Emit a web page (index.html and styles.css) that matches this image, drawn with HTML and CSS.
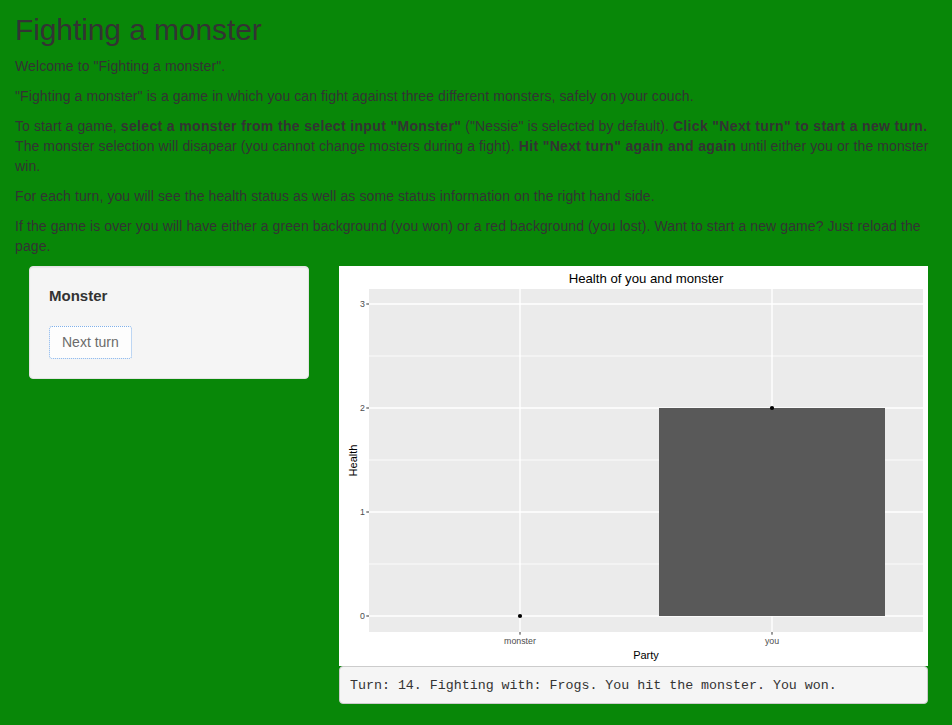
FILE: index.html
```html
<!DOCTYPE html>
<html lang="en">
<head>
<meta charset="utf-8">
<title>Fighting a monster</title>
<link rel="stylesheet" href="styles.css">
</head>
<body>
<div class="container">
  <h2 class="title">Fighting a monster</h2>
  <p>Welcome to "Fighting a monster".</p>
  <p>"Fighting a monster" is a game in which you can fight against three different monsters, safely on your couch.</p>
  <p>To start a game, <strong>select a monster from the select input "Monster"</strong> ("Nessie" is selected by default). <strong>Click "Next turn" to start a new turn.</strong> The monster selection will disapear (you cannot change mosters during a fight). <strong>Hit "Next turn" again and again</strong> until either you or the monster win.</p>
  <p>For each turn, you will see the health status as well as some status information on the right hand side.</p>
  <p>If the game is over you will have either a green background (you won) or a red background (you lost). Want to start a new game? Just reload the page.</p>

  <div class="layout">
    <div class="well">
      <div class="form-group">
        <label class="control-label">Monster</label>
      </div>
      <button class="btn" type="button">Next turn</button>
    </div>

    <div class="main">
      <div class="plot">
        <svg width="589" height="400" viewBox="0 0 589 400" xmlns="http://www.w3.org/2000/svg">
          <rect x="0" y="0" width="589" height="400" fill="#ffffff"/>
          <text x="307" y="16.7" class="g-title" text-anchor="middle">Health of you and monster</text>
          <rect x="30" y="23" width="554" height="343" fill="#EBEBEB"/>
          <g stroke="#ffffff" stroke-width="0.8">
            <line x1="30" y1="90" x2="584" y2="90"/>
            <line x1="30" y1="194" x2="584" y2="194"/>
            <line x1="30" y1="298" x2="584" y2="298"/>
          </g>
          <g stroke="#ffffff" stroke-width="1.4">
            <line x1="30" y1="38" x2="584" y2="38"/>
            <line x1="30" y1="142" x2="584" y2="142"/>
            <line x1="30" y1="246" x2="584" y2="246"/>
            <line x1="30" y1="350" x2="584" y2="350"/>
            <line x1="181" y1="23" x2="181" y2="366"/>
            <line x1="433" y1="23" x2="433" y2="366"/>
          </g>
          <rect x="320" y="142" width="226" height="208" fill="#595959"/>
          <circle cx="181" cy="350" r="2.1" fill="#000"/>
          <circle cx="433" cy="142" r="2.1" fill="#000"/>
          <g stroke="#333333" stroke-width="1">
            <line x1="27.3" y1="38" x2="30" y2="38"/>
            <line x1="27.3" y1="142" x2="30" y2="142"/>
            <line x1="27.3" y1="246" x2="30" y2="246"/>
            <line x1="27.3" y1="350" x2="30" y2="350"/>
            <line x1="181" y1="366" x2="181" y2="368.7"/>
            <line x1="433" y1="366" x2="433" y2="368.7"/>
          </g>
          <g class="g-axis" text-anchor="end">
            <text x="26" y="41.2">3</text>
            <text x="26" y="145.2">2</text>
            <text x="26" y="249.2">1</text>
            <text x="26" y="353.2">0</text>
          </g>
          <g class="g-axis" text-anchor="middle">
            <text x="181" y="378.3">monster</text>
            <text x="433" y="378.3">you</text>
          </g>
          <text x="307" y="393" class="g-lab" text-anchor="middle">Party</text>
          <text class="g-lab" text-anchor="middle" transform="translate(17.5 194.5) rotate(-90)">Health</text>
        </svg>
      </div>
      <pre class="status">Turn: 14. Fighting with: Frogs. You hit the monster. You won.</pre>
    </div>
  </div>
</div>
</body>
</html>
```

FILE: styles.css
```css
html, body {
  margin: 0;
  padding: 0;
}

body {
  background: #088708;
  color: #333333;
  font-family: "Liberation Sans", Arial, Helvetica, sans-serif;
  font-size: 14px;
  line-height: 20px;
}

.container {
  padding: 0 15px;
}

.title {
  font-size: 30px;
  font-weight: 500;
  line-height: 1.1;
  margin: 13px 0 10px;
  color: #333333;
  letter-spacing: -0.1px;
}

p {
  margin: 0 0 10px;
  letter-spacing: 0.09px;
}

strong {
  font-weight: bold;
  letter-spacing: 0.35px;
}

.layout {
  display: grid;
  grid-template-columns: 280px 589px;
  column-gap: 30px;
  align-items: start;
  margin-left: 14px;
}

.well {
  background: #f5f5f5;
  border: 1px solid #e3e3e3;
  border-radius: 4px;
  padding: 19px;
  box-shadow: inset 0 1px 1px rgba(0, 0, 0, 0.05);
}

.form-group {
  margin-bottom: 15px;
}

.control-label {
  display: inline-block;
  font-weight: bold;
  font-size: 15px;
  margin-bottom: 5px;
  color: #333333;
}

.btn {
  display: inline-block;
  font-family: "Liberation Sans", Arial, Helvetica, sans-serif;
  font-size: 14px;
  line-height: 19px;
  padding: 6px 12px;
  background: #fdfdfd;
  color: #6b6b6b;
  border: 1px dotted #7fb0ea;
  border-radius: 3px;
  margin: 0;
}

.main {
  display: flex;
  flex-direction: column;
}

.plot {
  height: 400px;
  line-height: 0;
}

.plot svg {
  display: block;
  font-family: "Liberation Sans", Arial, Helvetica, sans-serif;
}

.g-title {
  font-size: 13.2px;
  fill: #000000;
}

.g-axis {
  font-size: 8.8px;
  fill: #4d4d4d;
}

.g-lab {
  font-size: 11px;
  fill: #000000;
}

.status {
  margin: 0;
  padding: 10px 10px 8px;
  background: #f5f5f5;
  border: 1px solid #cccccc;
  border-radius: 4px;
  font-family: "Liberation Mono", "Courier New", monospace;
  font-size: 13.3px;
  line-height: 18px;
  color: #333333;
  white-space: pre-wrap;
}
```
